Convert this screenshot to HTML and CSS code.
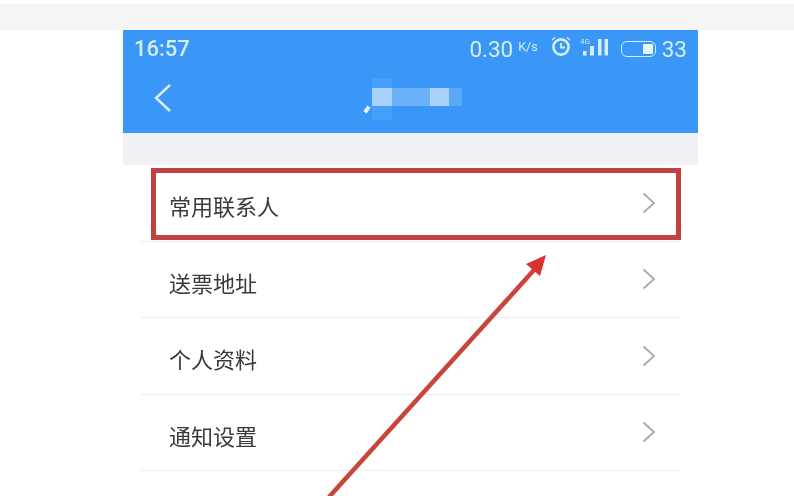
FILE: index.html
```html
<!DOCTYPE html>
<html lang="zh-CN">
<head>
    <meta charset="UTF-8">
    <meta name="viewport" content="width=device-width, initial-scale=1.0">
    <title>常用联系人</title>
    <link rel="stylesheet" href="styles.css">
</head>
<body>

<div class="top-band"></div>

<div class="phone">
    <!-- Status bar and title -->
    <header class="app-header">
        <div class="status-bar">
            <span class="clock">16:57</span>
            <div class="status-right">
                <span class="speed">0.30</span>
                <span class="speed-unit">K/s</span>
                <svg class="alarm" width="24" height="22" viewBox="0 0 24 22">
                    <circle cx="12" cy="12" r="7.6" fill="none" stroke="#d3efef" stroke-width="2.6"/>
                    <path d="M12 8V12.5H16" fill="none" stroke="#d3efef" stroke-width="1.8"/>
                    <path d="M3 5L6 2.5M21 5L18 2.5" stroke="#d3efef" stroke-width="1.4"/>
                </svg>
                <svg class="signal" width="28" height="20" viewBox="0 0 28 20">
                    <text class="signal-label" x="0" y="7">4G</text>
                    <rect x="3" y="14" width="3.5" height="4.5" fill="#e0f3f3"/>
                    <rect x="10" y="9" width="4" height="9.5" fill="#d3efef"/>
                    <rect x="18" y="2" width="3.5" height="16.5" fill="#d3efef"/>
                    <rect x="24.5" y="2" width="3.5" height="16.5" fill="#d3efef"/>
                </svg>
                <div class="battery"><div class="battery-level"></div></div>
                <span class="battery-text">33</span>
            </div>
        </div>
        <div class="title-bar">
            <svg class="back" width="20" height="30" viewBox="0 0 20 30">
                <path d="M17 2L3 15L17 28" fill="none" stroke="#d9eef8" stroke-width="2.4"/>
            </svg>
            <div class="blur-title">
                <span class="blur-comma"></span>
                <span class="blur-halo"></span>
                <span class="blur-a"></span>
                <span class="blur-b"></span>
                <span class="blur-c"></span>
                <span class="blur-d"></span>
            </div>
        </div>
    </header>

    <div class="gap"></div>

    <!-- Menu list -->
    <ul class="menu">
        <li class="menu-item">
            <span class="menu-label">常用联系人</span>
            <svg class="chevron" width="14" height="22" viewBox="0 0 14 22"><path d="M1.5 1.5L12 11L1.5 20.5" fill="none" stroke="#a9a9a9" stroke-width="1.8"/></svg>
        </li>
        <li class="menu-item">
            <span class="menu-label">送票地址</span>
            <svg class="chevron" width="14" height="22" viewBox="0 0 14 22"><path d="M1.5 1.5L12 11L1.5 20.5" fill="none" stroke="#a9a9a9" stroke-width="1.8"/></svg>
        </li>
        <li class="menu-item">
            <span class="menu-label">个人资料</span>
            <svg class="chevron" width="14" height="22" viewBox="0 0 14 22"><path d="M1.5 1.5L12 11L1.5 20.5" fill="none" stroke="#a9a9a9" stroke-width="1.8"/></svg>
        </li>
        <li class="menu-item">
            <span class="menu-label">通知设置</span>
            <svg class="chevron" width="14" height="22" viewBox="0 0 14 22"><path d="M1.5 1.5L12 11L1.5 20.5" fill="none" stroke="#a9a9a9" stroke-width="1.8"/></svg>
        </li>
    </ul>
</div>

<!-- Red highlight box and arrow drawn over the screenshot -->
<div class="highlight"></div>
<svg class="arrow" width="794" height="496" viewBox="0 0 794 496">
    <line x1="329" y1="497" x2="534" y2="270" stroke="#c8443c" stroke-width="4.5"/>
    <polygon points="546,255 526,264 540,276" fill="#d8322e"/>
</svg>

</body>
</html>
```

FILE: styles.css
```css
/* Page */
html, body {
    margin: 0;
    padding: 0;
    height: 496px;
    overflow: hidden;
    background-color: #fff;
}

body {
    position: relative;
    padding-top: 4px;
    box-sizing: border-box;
    font-family: "Liberation Sans", "Noto Sans CJK SC", sans-serif;
}

.top-band {
    height: 26px;
    background-color: #f5f5f5;
}

.phone {
    width: 575px;
    margin-left: 123px;
}

/* Blue header */
.app-header {
    height: 103px;
    background-color: #3a97f7;
    color: #d3efef;
}

.status-bar {
    height: 37px;
    padding: 0 11px;
    display: flex;
    justify-content: space-between;
    align-items: center;
    filter: blur(0.4px);
}

.clock {
    font-family: Roboto, sans-serif;
    font-size: 22px;
    font-weight: 500;
}

.status-right {
    display: flex;
    align-items: center;
    font-family: Roboto, sans-serif;
    font-size: 22.5px;
}

.speed-unit {
    font-size: 12.5px;
    margin: -4px 11px 0 5px;
}

.alarm {
    margin: 0 7px 5px 0;
}

.signal {
    margin: 0 13px 3px 0;
}

.signal-label {
    font-family: Roboto, sans-serif;
    font-size: 8px;
    fill: #cdeaec;
}

.battery {
    width: 35px;
    height: 16px;
    border: 1.5px solid #d3efef;
    border-radius: 6px;
    box-sizing: border-box;
    display: flex;
    justify-content: flex-end;
    align-items: center;
    padding-right: 2px;
    margin-right: 6px;
}

.battery-level {
    width: 10px;
    height: 10px;
    background-color: #e6f5f5;
    border-radius: 1px;
}

.title-bar {
    height: 66px;
    display: flex;
    align-items: flex-start;
    position: relative;
}

.back {
    margin: 16px 0 0 30px;
    filter: blur(0.4px);
}

/* Blurred out title */
.blur-title {
    position: absolute;
    left: 241px;
    top: 11px;
    width: 100px;
    height: 46px;
    filter: blur(0.7px);
}

.blur-title span {
    position: absolute;
}

.blur-comma {
    left: 1px;
    top: 28px;
    width: 4px;
    height: 7px;
    background-color: #e3f1fb;
    transform: rotate(35deg);
}

.blur-halo {
    left: 8px;
    top: 0;
    width: 20px;
    height: 42px;
    background-color: #469ff8;
}

.blur-a {
    left: 8px;
    top: 10px;
    width: 20px;
    height: 18px;
    background-color: #a9d2fb;
}

.blur-b {
    left: 28px;
    top: 10px;
    width: 38px;
    height: 18px;
    background-color: #6cb2fa;
}

.blur-c {
    left: 66px;
    top: 10px;
    width: 19px;
    height: 18px;
    background-color: #a9d2fb;
}

.blur-d {
    left: 85px;
    top: 10px;
    width: 13px;
    height: 18px;
    background-color: #5aa9f8;
}

.gap {
    height: 32px;
    background-color: #f1f1f5;
}

/* Menu rows */
.menu {
    list-style: none;
    margin: 0 17px 0 18px;
    padding: 0;
}

.menu-item {
    height: 76.5px;
    box-sizing: border-box;
    padding: 0 25px 0 28px;
    display: flex;
    justify-content: space-between;
    align-items: center;
    border-bottom: 1px solid #ececec;
    font-family: "Noto Sans CJK SC", sans-serif;
    font-size: 22px;
    color: #3a3a3a;
}

.menu-label {
    padding-top: 5px;
    filter: blur(0.4px);
}

.chevron {
    filter: blur(0.4px);
}

/* Annotations */
.highlight {
    position: absolute;
    left: 151px;
    top: 168px;
    width: 530px;
    height: 72px;
    box-sizing: border-box;
    border: 5px solid #c0413f;
}

.arrow {
    position: absolute;
    left: 0;
    top: 0;
}
```
